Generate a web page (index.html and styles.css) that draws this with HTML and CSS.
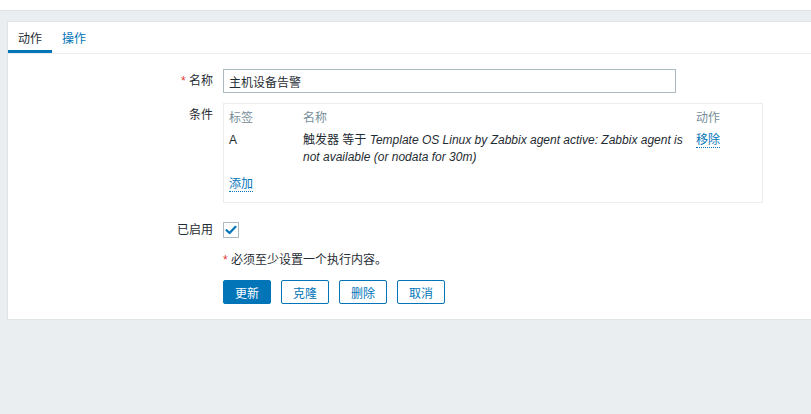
FILE: index.html
```html
<!DOCTYPE html>
<html lang="zh">
<head>
<meta charset="utf-8">
<title>动作</title>
<link rel="stylesheet" href="styles.css">
</head>
<body>
<div class="topbar"></div>
<div class="card">
  <div class="tabs">
    <div class="tab active">动作</div>
    <div class="tab">操作</div>
  </div>
  <div class="form">
    <div class="row row-name">
      <div class="label"><span class="req">*</span> 名称</div>
      <div class="field"><input class="text-input" type="text" value="主机设备告警"></div>
    </div>
    <div class="row row-cond">
      <div class="label label-top">条件</div>
      <div class="field">
        <div class="cond-box">
          <table class="cond-table">
            <thead>
              <tr><th class="c1">标签</th><th class="c2">名称</th><th class="c3">动作</th></tr>
            </thead>
            <tbody>
              <tr class="cond-row">
                <td class="c1">A</td>
                <td class="c2">触发器 等于 <i>Template OS Linux by Zabbix agent active: Zabbix agent is not available (or nodata for 30m)</i></td>
                <td class="c3"><span class="link">移除</span></td>
              </tr>
            </tbody>
          </table>
          <div class="add"><span class="link">添加</span></div>
        </div>
      </div>
    </div>
    <div class="row row-enabled">
      <div class="label">已启用</div>
      <div class="field">
        <span class="checkbox">
          <svg width="12" height="10" viewBox="0 0 12 10"><path d="M1.5 5.2 L4.6 8 L10.5 1.8" fill="none" stroke="#0275b8" stroke-width="2.2" stroke-linecap="round" stroke-linejoin="round"/></svg>
        </span>
      </div>
    </div>
    <div class="row row-note">
      <div class="label"></div>
      <div class="field note"><span class="req">*</span> 必须至少设置一个执行内容。</div>
    </div>
    <div class="row row-buttons">
      <div class="label"></div>
      <div class="field buttons">
        <button class="btn primary">更新</button>
        <button class="btn">克隆</button>
        <button class="btn">删除</button>
        <button class="btn">取消</button>
      </div>
    </div>
  </div>
</div>
</body>
</html>
```
FILE: styles.css
```css
* { box-sizing: border-box; }
html, body { margin: 0; padding: 0; }
body {
  background: #ebeef0;
  font-family: "Liberation Sans", Arial, "Noto Sans CJK SC", sans-serif;
  font-size: 12px;
  color: #1f2c33;
  height: 414px;
  overflow: hidden;
}
.topbar {
  height: 11px;
  background: #fff;
  border-bottom: 1px solid #dde2e5;
}
.card {
  margin: 10px 0 0 7px;
  background: #fff;
  border: 1px solid #dfe4e7;
  border-right: none;
  padding-bottom: 15px;
}
.tabs {
  display: flex;
  border-bottom: 1px solid #ebeef0;
}
.tab {
  padding: 9px 10px 3px;
  line-height: 16px;
  color: #0275b8;
  border-bottom: 3px solid transparent;
}
.tab.active {
  color: #1f2c33;
  border-bottom-color: #0275b8;
}
.form { padding-top: 15px; }
.row { display: flex; }
.label {
  width: 205px;
  flex: none;
  text-align: right;
  line-height: 24px;
}
.field { margin-left: 10px; }
.req { color: #e33734; }
.row-cond { margin-top: 10px; }
.label-top { line-height: 16px; padding-top: 4px; }
.text-input {
  display: block;
  width: 453px;
  height: 24px;
  border: 1px solid #acbbc2;
  padding: 0 5px;
  font-family: "Liberation Sans", Arial, "Noto Sans CJK SC", sans-serif;
  font-size: 12px;
  color: #1f2c33;
  outline: none;
}
.cond-box {
  width: 540px;
  height: 100px;
  border: 1px solid #ebeef0;
}
.cond-table {
  border-collapse: collapse;
  width: 100%;
}
.cond-table th, .cond-table td {
  padding: 0 5px;
  text-align: left;
  vertical-align: top;
}
.cond-table th {
  font-weight: normal;
  color: #768d99;
  line-height: 16px;
  padding-top: 6px;
  padding-bottom: 1px;
}
.cond-row td {
  line-height: 17px;
  padding-top: 5px;
}
.c1 { width: 74px; }
.c2 { width: 393px; }
.link {
  color: #0275b8;
  border-bottom: 1px dotted #0275b8;
}
.add {
  padding: 10px 5px 0;
  line-height: 16px;
}
.row-enabled { margin-top: 19px; }
.row-enabled .label { line-height: 16px; }
.checkbox {
  display: flex;
  align-items: center;
  justify-content: center;
  width: 16px;
  height: 16px;
  border: 1px solid #acbbc2;
}
.row-note { margin-top: 14px; }
.note { line-height: 16px; }
.row-note .label { line-height: 16px; }
.row-buttons { margin-top: 12px; }
.buttons { display: flex; gap: 10px; }
.btn {
  width: 48px;
  height: 24px;
  padding: 0;
  border: 1px solid #0275b8;
  border-radius: 2px;
  background: #fff;
  color: #0275b8;
  font-family: "Liberation Sans", Arial, "Noto Sans CJK SC", sans-serif;
  font-size: 12px;
}
.btn.primary {
  background: #0275b8;
  color: #fff;
}
```
